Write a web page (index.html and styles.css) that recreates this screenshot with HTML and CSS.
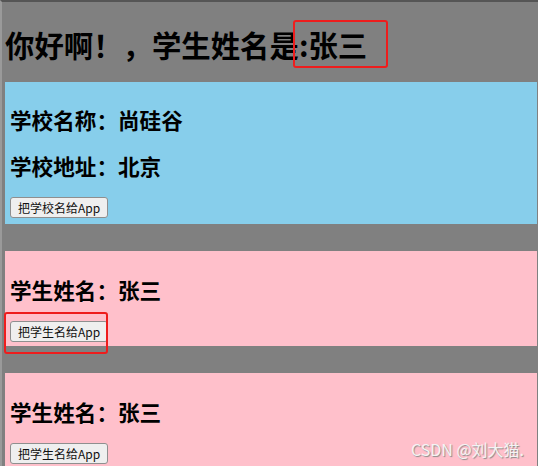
FILE: index.html
```html
<!DOCTYPE html>
<html lang="zh-CN">

<head>
    <meta charset="UTF-8">
    <meta name="viewport" content="width=device-width, initial-scale=1.0">
    <title>App</title>
    <link rel="stylesheet" href="styles.css">
</head>

<body>
    <div class="app">
        <h1 class="title">你好啊！，学生姓名是:张三</h1>

        <!-- 学校组件 -->
        <div class="school">
            <h2>学校名称：尚硅谷</h2>
            <h2>学校地址：北京</h2>
            <button type="button">把学校名给App</button>
        </div>

        <!-- 学生组件 -->
        <div class="student">
            <h2>学生姓名：张三</h2>
            <button type="button">把学生名给App</button>
        </div>

        <div class="student">
            <h2>学生姓名：张三</h2>
            <button type="button">把学生名给App</button>
        </div>

        <div class="mark mark_title"></div>
        <div class="mark mark_btn"></div>
        <p class="watermark">CSDN @刘大猫.</p>
    </div>
</body>

</html>
```

FILE: styles.css
```css
html,
body {
    margin: 0;
    height: 100%;
    overflow: hidden;
}

body {
    font-family: "Noto Sans CJK SC", "Liberation Sans", sans-serif;
    background-color: gray;
}

.app {
    position: relative;
    height: 100%;
    border-top: 2px solid #555;
    border-left: 2px solid #9a9a9a;
    padding-left: 3px;
    padding-right: 1px;
    box-sizing: border-box;
    background-color: gray;
}

.title {
    margin: 22px 0 18px 0;
    font-size: 29.4px;
    line-height: 40px;
    font-weight: bold;
}

.school,
.student {
    display: flex;
    flex-direction: column;
    align-items: flex-start;
    gap: 16px;
    padding: 23px 5px 6px 5px;
}

.school {
    background-color: skyblue;
}

.student {
    margin-top: 27px;
    padding-top: 24px;
    padding-bottom: 4px;
    background-color: pink;
}

h2 {
    margin: 0;
    font-size: 21.6px;
    line-height: 30px;
    font-weight: bold;
}

button {
    height: 21px;
    padding: 0 7px;
    font-family: "Noto Sans CJK SC", "Liberation Sans", sans-serif;
    font-size: 12px;
    color: #111;
    background-color: #efefef;
    border: 1px solid #8f8f8f;
    border-radius: 3px;
}

.mark {
    position: absolute;
    border: 2px solid #ee1d1d;
    border-radius: 3px;
    box-sizing: border-box;
}

.mark_title {
    left: 291px;
    top: 18px;
    width: 95px;
    height: 48px;
}

.mark_btn {
    left: 2px;
    top: 310px;
    width: 104px;
    height: 42px;
}

.watermark {
    position: absolute;
    right: 14px;
    top: 435px;
    margin: 0;
    font-size: 16px;
    color: #f4f4f4;
    text-shadow: 1px 1px 1px #8a8a8a;
}
```
